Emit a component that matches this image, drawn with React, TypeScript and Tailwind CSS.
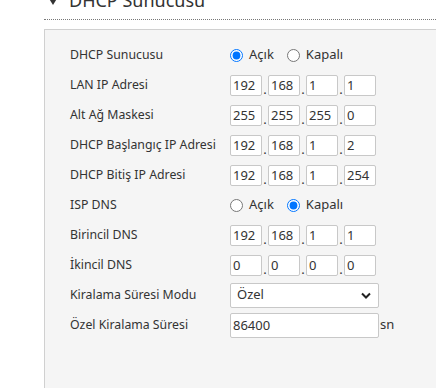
import React from 'react';

const font = { fontFamily: '"Noto Sans", "Open Sans", Arial, sans-serif' };

const IpInput = ({ parts }: { parts: string[] }) => (
  <div className="flex items-center">
    {parts.map((p, i) => (
      <React.Fragment key={i}>
        {i > 0 && <span className="w-[6px] text-center text-[13px] leading-none pt-[8px] text-[#333]">.</span>}
        <input
          readOnly
          value={p}
          className="w-[32px] h-[21px] border border-[#c8c8c8] rounded-[2px] bg-white px-[2px] text-[13px] text-[#333] outline-none"
        />
      </React.Fragment>
    ))}
  </div>
);

const Radio = ({ on, name }: { on: boolean; name: string }) => (
  <div className="flex items-center text-[13px] text-[#333]">
    <label className="flex items-center">
      <input type="radio" name={name} defaultChecked={on} className="m-0 w-[13px] h-[13px]" />
      <span className="ml-[6px]">Açık</span>
    </label>
    <label className="flex items-center ml-[13px]">
      <input type="radio" name={name} defaultChecked={!on} className="m-0 w-[13px] h-[13px]" />
      <span className="ml-[6px]">Kapalı</span>
    </label>
  </div>
);

const Row = ({ label, children }: { label: string; children: React.ReactNode }) => (
  <div className="flex items-center h-[30px]">
    <div className="w-[160px] text-[12.3px] text-[#333]">{label}</div>
    {children}
  </div>
);

export default function App() {
  return (
    <div className="w-[436px] h-[388px] overflow-hidden bg-white" style={font}>
      {/* section header, scrolled partly out of view */}
      <div className="flex items-center pl-[48px] h-[20px] -mt-[10px]">
        <svg width="10" height="8" viewBox="0 0 10 8" className="mt-[1px]">
          <path d="M0 0 H10 L5 8 Z" fill="#333" />
        </svg>
        <span className="ml-[11px] text-[18px] text-[#333]">DHCP Sunucusu</span>
      </div>
      <div className="ml-[44px] mt-[9px] border-t border-dotted border-[#777]" />
      <div className="ml-[44px] mt-[9px] h-[400px] w-[420px] border border-[#d0d0d0] bg-[#f5f5f5] pl-[25px] pt-[10px]">
        <Row label="DHCP Sunucusu"><Radio on name="dhcp" /></Row>
        <Row label="LAN IP Adresi"><IpInput parts={['192', '168', '1', '1']} /></Row>
        <Row label="Alt Ağ Maskesi"><IpInput parts={['255', '255', '255', '0']} /></Row>
        <Row label="DHCP Başlangıç IP Adresi"><IpInput parts={['192', '168', '1', '2']} /></Row>
        <Row label="DHCP Bitiş IP Adresi"><IpInput parts={['192', '168', '1', '254']} /></Row>
        <Row label="ISP DNS"><Radio on={false} name="isp" /></Row>
        <Row label="Birincil DNS"><IpInput parts={['192', '168', '1', '1']} /></Row>
        <Row label="İkincil DNS"><IpInput parts={['0', '0', '0', '0']} /></Row>
        <Row label="Kiralama Süresi Modu">
          <div className="relative w-[149px] h-[25px] border border-[#c8c8c8] rounded-[2px] bg-white flex items-center pl-[6px] text-[13px] text-[#333]">
            Özel
            <svg className="absolute right-[7px] top-[8px]" width="10" height="7" viewBox="0 0 10 7">
              <path d="M1 1.5 L5 5.5 L9 1.5" fill="none" stroke="#222" strokeWidth="2" />
            </svg>
          </div>
        </Row>
        <Row label="Özel Kiralama Süresi">
          <div className="flex items-center">
            <input
              readOnly
              value="86400"
              className="w-[149px] h-[25px] border border-[#c8c8c8] rounded-[2px] bg-white px-[2px] text-[13px] text-[#333] outline-none"
            />
            <span className="ml-[1px] text-[13px] text-[#333]">sn</span>
          </div>
        </Row>
      </div>
    </div>
  );
}
